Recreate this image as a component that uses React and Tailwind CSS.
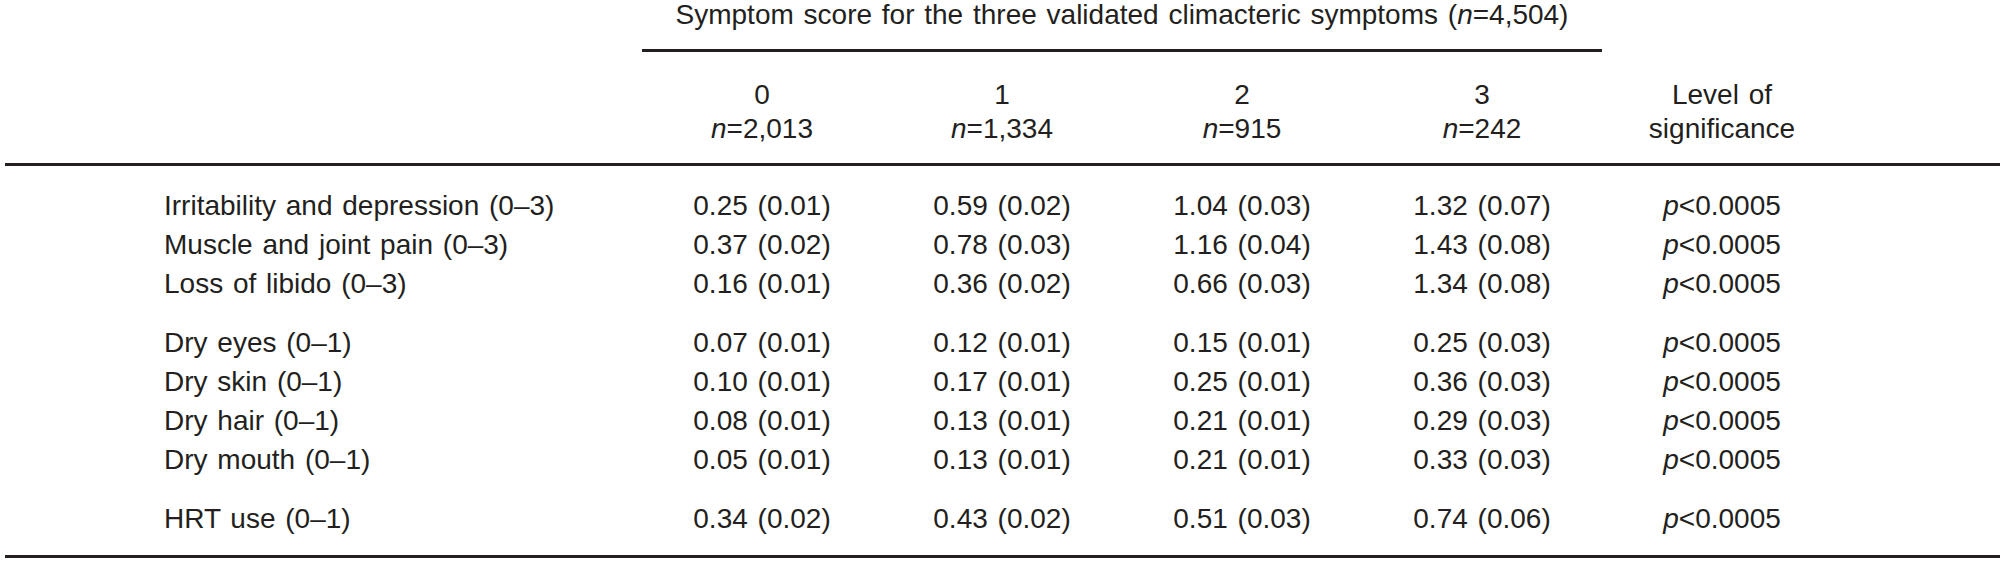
const groups = [
  [
    ['Irritability and depression (0–3)', '0.25 (0.01)', '0.59 (0.02)', '1.04 (0.03)', '1.32 (0.07)'],
    ['Muscle and joint pain (0–3)', '0.37 (0.02)', '0.78 (0.03)', '1.16 (0.04)', '1.43 (0.08)'],
    ['Loss of libido (0–3)', '0.16 (0.01)', '0.36 (0.02)', '0.66 (0.03)', '1.34 (0.08)'],
  ],
  [
    ['Dry eyes (0–1)', '0.07 (0.01)', '0.12 (0.01)', '0.15 (0.01)', '0.25 (0.03)'],
    ['Dry skin (0–1)', '0.10 (0.01)', '0.17 (0.01)', '0.25 (0.01)', '0.36 (0.03)'],
    ['Dry hair (0–1)', '0.08 (0.01)', '0.13 (0.01)', '0.21 (0.01)', '0.29 (0.03)'],
    ['Dry mouth (0–1)', '0.05 (0.01)', '0.13 (0.01)', '0.21 (0.01)', '0.33 (0.03)'],
  ],
  [
    ['HRT use (0–1)', '0.34 (0.02)', '0.43 (0.02)', '0.51 (0.03)', '0.74 (0.06)'],
  ],
];

const scores = [
  ['0', '2,013'],
  ['1', '1,334'],
  ['2', '915'],
  ['3', '242'],
];

const cols = 'grid grid-cols-[637px_240px_240px_240px_240px_240px_1fr]';

const App = () => {
  return (
    <div className="w-[2000px] h-[567px] bg-white pl-[5px] text-[#231f20] text-[28px] [word-spacing:2px] font-['Liberation_Sans',Arial,sans-serif]">
      <div className={cols}>
        <div className="col-start-2 col-span-4 text-center h-[30px] leading-[30px] whitespace-nowrap">
          Symptom score for the three validated climacteric symptoms (<i>n</i>=4,504)
        </div>
        <div className="col-start-2 col-span-4 h-[3px] bg-[#231f20] mt-[19px]"></div>
      </div>
      <div className={`${cols} mt-[26px] mb-[17px] leading-[34px] text-center`}>
        <div></div>
        {scores.map(([s, n]) => (
          <div key={s}>
            <div>{s}</div>
            <div><i>n</i>={n}</div>
          </div>
        ))}
        <div>
          <div>Level of</div>
          <div>significance</div>
        </div>
      </div>
      <div className="h-[3px] bg-[#231f20]"></div>
      <div className="pt-[20px] pb-[17px] flex flex-col gap-[20px] leading-[39px]">
        {groups.map((rows, gi) => (
          <div key={gi}>
            {rows.map((r) => (
              <div key={r[0]} className={cols}>
                <div className="pl-[159px] whitespace-nowrap">{r[0]}</div>
                {r.slice(1).map((v, i) => (
                  <div key={i} className="text-center">{v}</div>
                ))}
                <div className="text-center"><i>p</i>&lt;0.0005</div>
              </div>
            ))}
          </div>
        ))}
      </div>
      <div className="h-[3px] bg-[#231f20]"></div>
    </div>
  );
};

export default App;
